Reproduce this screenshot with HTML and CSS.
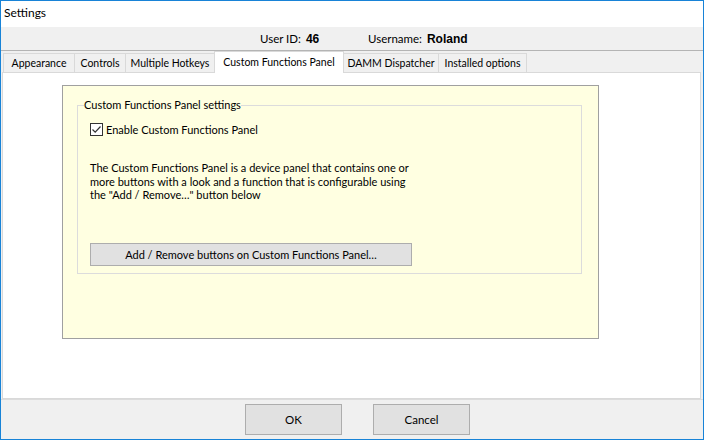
FILE: index.html
```html
<!DOCTYPE html>
<html lang="en">
<head>
  <meta charset="UTF-8" />
  <title>Settings</title>
  <link rel="stylesheet" href="styles.css">
</head>
<body>
  <div class="window">
    <div class="titlebar">Settings</div>

    <div class="infobar">
      <span class="info user-id">User ID: <b>46</b></span>
      <span class="info">Username: <b>Roland</b></span>
    </div>

    <div class="tabarea">
      <div class="tabs">
        <div class="tab tab-appearance">Appearance</div>
        <div class="tab tab-controls">Controls</div>
        <div class="tab tab-hotkeys">Multiple Hotkeys</div>
        <div class="tab tab-cfp active">Custom Functions Panel</div>
        <div class="tab tab-damm">DAMM Dispatcher</div>
        <div class="tab tab-options">Installed options</div>
      </div>

      <div class="panel">
        <div class="yellow-box">
          <fieldset class="group">
            <legend>Custom Functions Panel settings</legend>
            <label class="check">
              <span class="box">
                <svg width="11" height="11" viewBox="0 0 11 11"><path d="M1.5 5.5 L4.2 8.2 L9.5 2.5" fill="none" stroke="#333" stroke-width="1.2"/></svg>
              </span>
              Enable Custom Functions Panel
            </label>
            <p class="desc">The Custom Functions Panel is a device panel that contains one or<br>more buttons with a look and a function that is configurable using<br>the "Add / Remove…" button below</p>
            <button class="btn wide">Add / Remove buttons on Custom Functions Panel…</button>
          </fieldset>
        </div>
      </div>
    </div>

    <div class="footer">
      <button class="btn">OK</button>
      <button class="btn">Cancel</button>
    </div>
  </div>
</body>
</html>
```

FILE: styles.css
```css
body {
  margin: 0;
  padding: 0;
  font-family: Lato, "Noto Sans", sans-serif;
  font-size: 11px;
  color: #000;
}
.window {
  width: 704px;
  height: 440px;
  box-sizing: border-box;
  border: 1px solid #1883d7;
  background: #fff;
  display: flex;
  flex-direction: column;
}
.titlebar {
  height: 26px;
  line-height: 24px;
  padding-left: 3px;
  font-size: 12px;
  background: #fff;
}
.infobar {
  height: 23px;
  background: #f0f0f0;
  border-bottom: 1px solid #b4b4b4;
  display: flex;
  align-items: center;
  padding-left: 259px;
  font-size: 11.5px;
}
.info.user-id {
  width: 108px;
}
.info b {
  font-family: "Liberation Sans", Arial, sans-serif;
  font-size: 12px;
  margin-left: 2px;
}
.tabarea {
  flex: 1;
  background: #f0f0f0;
  display: flex;
  flex-direction: column;
  padding: 0 2px 0 1px;
}
.tabs {
  height: 21px;
  display: flex;
  align-items: flex-end;
  padding-left: 1px;
}
.tab {
  box-sizing: border-box;
  height: 19px;
  line-height: 18px;
  font-size: 10.5px;
  text-align: center;
  white-space: nowrap;
  border: 1px solid #d9d9d9;
  border-bottom: none;
  margin-right: -1px;
  background: #f0f0f0;
}
.tab.active {
  height: 22px;
  line-height: 20px;
  background: #fff;
  margin-bottom: -1px;
  position: relative;
}
.tab-appearance { width: 72px; }
.tab-controls { width: 52px; }
.tab-hotkeys { width: 90px; }
.tab-cfp { width: 130px; }
.tab-damm { width: 96px; }
.tab-options { width: 89px; }
.panel {
  flex: 1;
  background: #fff;
  border: 1px solid #d9d9d9;
  padding: 12px 0 0 59px;
}
.yellow-box {
  width: 537px;
  height: 254px;
  box-sizing: border-box;
  background: #ffffe1;
  border: 1px solid #a0a0a0;
  padding: 12px 0 0 14px;
}
.group {
  width: 505px;
  height: 176px;
  box-sizing: border-box;
  margin: 0;
  padding: 10px 0 0 12px;
  border: 1px solid #dcdcdc;
}
.group legend {
  padding: 0;
  margin-left: -6px;
  line-height: 14px;
}
.check {
  display: flex;
  align-items: center;
  gap: 3px;
  height: 14px;
}
.box {
  width: 11px;
  height: 11px;
  border: 1px solid #333;
  background: #fff;
  display: inline-flex;
}
.desc {
  margin: 25px 0 0 0;
  line-height: 13.5px;
}
.btn {
  font-family: Lato, "Noto Sans", sans-serif;
  font-size: 11.5px;
  color: #000;
  background: #e1e1e1;
  border: 1px solid #adadad;
  width: 97px;
  height: 31px;
  padding: 0;
}
.btn.wide {
  display: block;
  width: 322px;
  height: 23px;
  margin-top: 41px;
  font-size: 11px;
}
.footer {
  height: 39px;
  background: #f0f0f0;
  border-top: 1px solid #dcdcdc;
  display: flex;
  align-items: center;
  justify-content: center;
  gap: 31px;
  padding-left: 11px;
}
```
